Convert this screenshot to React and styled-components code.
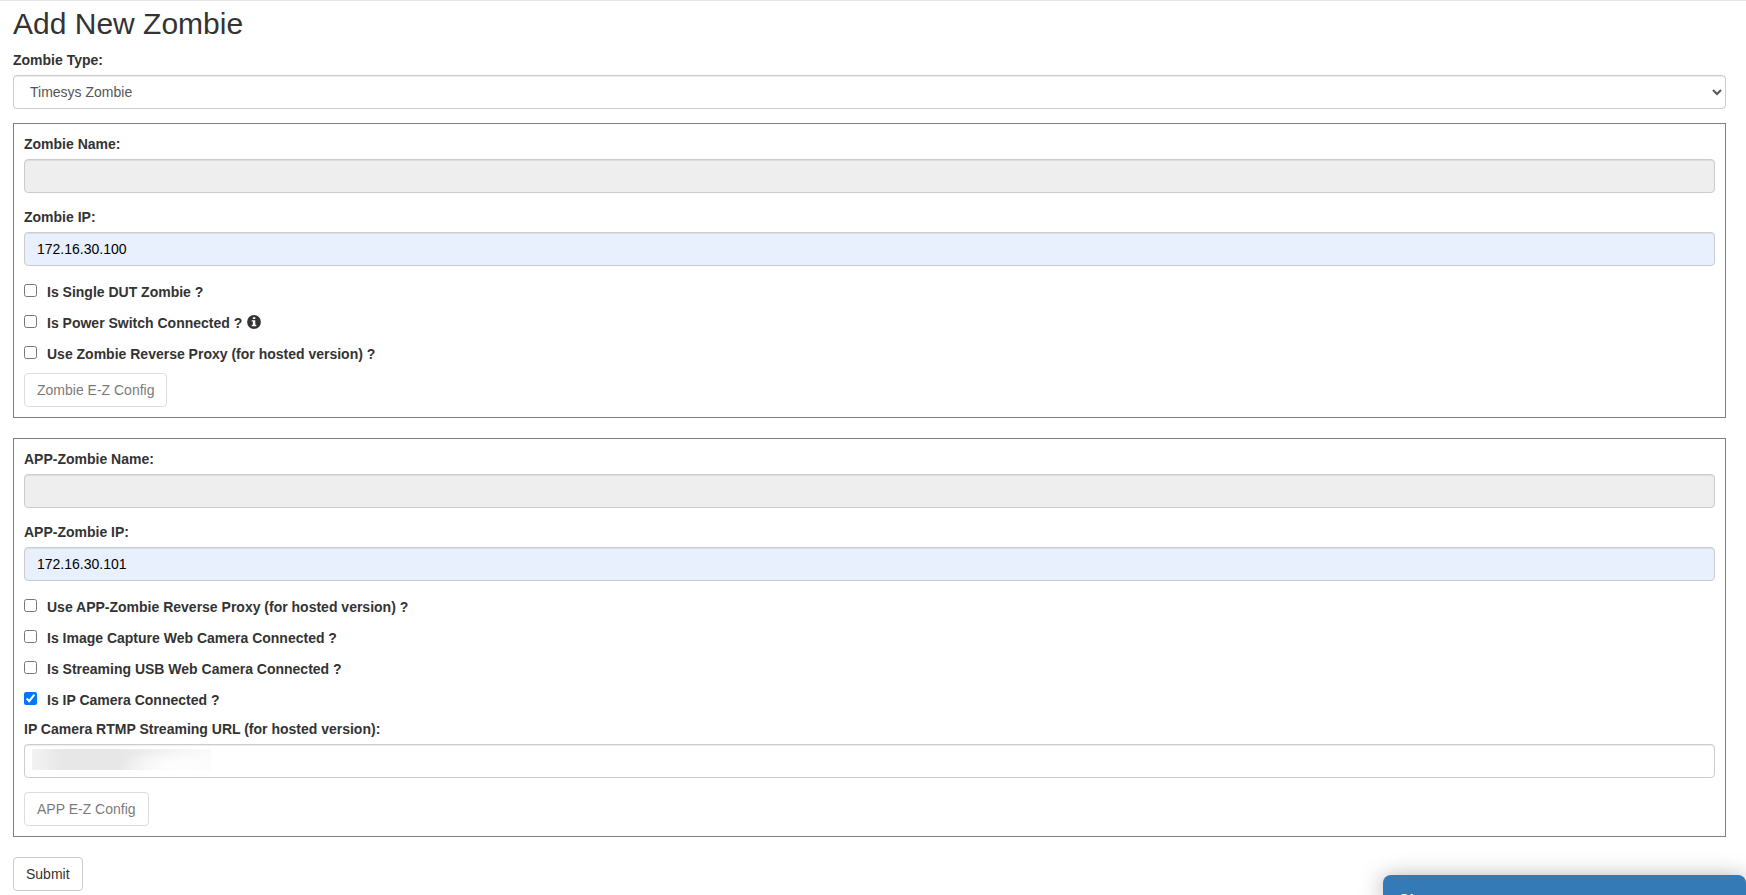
import React from "react";
import styled, { createGlobalStyle } from "styled-components";

const GlobalStyle = createGlobalStyle`
  *, *::before, *::after { box-sizing: border-box; }
  html { height: 100%; overflow: hidden; }
  body {
    margin: 0;
    background: #fff;
    color: #333;
    font-family: "Liberation Sans", Arial, sans-serif;
    font-size: 14px;
    line-height: 20px;
  }
`;

const Page = styled.main`
  border-top: 1px solid #e7e7e7;
  padding: 6px 20px 4px 13px;
`;

const Title = styled.h2`
  margin: 0 0 10px;
  font-size: 30px;
  font-weight: 500;
  line-height: 33px;
`;

const Field = styled.div`
  display: flex;
  flex-direction: column;
  gap: 5px;
  margin-bottom: 14px;
`;

const FieldLabel = styled.label`
  font-weight: 700;
`;

const controlColors = {
  plain: ["#fff", "#555"],
  filled: ["#e8f0fe", "#000"],
  disabled: ["#eee", "#555"],
};

const TextInput = styled.input`
  width: 100%;
  height: 34px;
  padding: 6px 12px;
  border: 1px solid #ccc;
  border-radius: 4px;
  background: ${(p) => controlColors[p.$tone][0]};
  color: ${(p) => controlColors[p.$tone][1]};
  box-shadow: inset 0 1px 1px rgba(0, 0, 0, 0.075);
  font: inherit;
`;

const Select = styled.select`
  width: 100%;
  height: 34px;
  padding: 6px 12px;
  border: 1px solid #ccc;
  border-radius: 4px;
  background-color: #fff;
  color: #555;
  box-shadow: inset 0 1px 1px rgba(0, 0, 0, 0.075);
  font: inherit;
`;

const Panel = styled.section`
  margin-bottom: 20px;
  padding: 10px;
  border: 1px solid #808080;
`;

const CheckList = styled.div`
  display: flex;
  flex-direction: column;
  align-items: flex-start;
  gap: 11px;
  padding: 2px 0 9px;
`;

const CheckLabel = styled.label`
  display: flex;
  align-items: flex-start;
  gap: 10px;
  font-weight: 700;
`;

const CheckBox = styled.input`
  width: 13px;
  height: 13px;
  margin: 2px 0 0;
`;

const CheckText = styled.span`
  display: flex;
  gap: 5px;
`;

const InfoSvg = styled.svg`
  width: 14px;
  height: 14px;
  margin-top: 2px;
`;

const Button = styled.button`
  display: block;
  height: 34px;
  padding: 6px 12px;
  border: 1px solid #ccc;
  border-radius: 4px;
  background: #fff;
  color: #333;
  font: inherit;
  &:disabled { opacity: 0.65; }
`;

const MaskedInput = styled.div`
  position: relative;
`;

const Mask = styled.span`
  position: absolute;
  left: 8px;
  top: 5px;
  width: 179px;
  height: 21px;
  background:
    linear-gradient(90deg, #f3f3f3, rgba(243, 243, 243, 0) 16%),
    radial-gradient(ellipse 36% 80% at 84% 80%, #fdfdfd 25%, rgba(253, 253, 253, 0)),
    linear-gradient(90deg, #e7e7e7 48%, #f9f9f9 96%);
`;

const ChatBar = styled.aside`
  position: fixed;
  right: 0;
  bottom: 0;
  width: 363px;
  height: 20px;
  padding: 16px 15px 0;
  border-radius: 8px 8px 0 0;
  background: #337ab7;
  color: #fff;
  box-shadow: 0 4px 24px rgba(0, 0, 0, 0.4);
  font-size: 16px;
  font-weight: 700;
`;

function InfoIcon() {
  return (
    <InfoSvg viewBox="0 0 14 14" aria-hidden="true">
      <circle cx="7" cy="7" r="6.9" fill="#333" />
      <path fill="#fff" d="M5.9 2.2h2.4v1.9H5.9zM4.7 5.2h3.6v4.5h1v1.6H4.7V9.7h1.2V6.6H4.7z" />
    </InfoSvg>
  );
}

function Text({ id, label, tone = "plain", value = "", masked }) {
  const input = (
    <TextInput id={id} type="text" $tone={tone} defaultValue={value} disabled={tone === "disabled"} />
  );
  return (
    <Field>
      <FieldLabel htmlFor={id}>{label}</FieldLabel>
      {masked ? <MaskedInput>{input}<Mask /></MaskedInput> : input}
    </Field>
  );
}

function Check({ id, label, checked = false, info }) {
  return (
    <CheckLabel htmlFor={id}>
      <CheckBox id={id} type="checkbox" defaultChecked={checked} />
      <CheckText>{label}{info && <InfoIcon />}</CheckText>
    </CheckLabel>
  );
}

export default function App() {
  return (
    <>
      <GlobalStyle />
      <Page>
        <Title>Add New Zombie</Title>
        <Field>
          <FieldLabel htmlFor="type">Zombie Type:</FieldLabel>
          <Select id="type"><option>Timesys Zombie</option></Select>
        </Field>
        <Panel>
          <Text id="name" label="Zombie Name:" tone="disabled" />
          <Text id="ip" label="Zombie IP:" tone="filled" value="172.16.30.100" />
          <CheckList>
            <Check id="single" label="Is Single DUT Zombie ?" />
            <Check id="power" label="Is Power Switch Connected ?" info />
            <Check id="proxy" label="Use Zombie Reverse Proxy (for hosted version) ?" />
          </CheckList>
          <Button type="button" disabled>Zombie E-Z Config</Button>
        </Panel>
        <Panel>
          <Text id="app-name" label="APP-Zombie Name:" tone="disabled" />
          <Text id="app-ip" label="APP-Zombie IP:" tone="filled" value="172.16.30.101" />
          <CheckList>
            <Check id="app-proxy" label="Use APP-Zombie Reverse Proxy (for hosted version) ?" />
            <Check id="image" label="Is Image Capture Web Camera Connected ?" />
            <Check id="usb" label="Is Streaming USB Web Camera Connected ?" />
            <Check id="ipcam" label="Is IP Camera Connected ?" checked />
          </CheckList>
          <Text id="rtmp" label="IP Camera RTMP Streaming URL (for hosted version):" masked />
          <Button type="button" disabled>APP E-Z Config</Button>
        </Panel>
        <Button type="submit">Submit</Button>
      </Page>
      <ChatBar>Chat</ChatBar>
    </>
  );
}
